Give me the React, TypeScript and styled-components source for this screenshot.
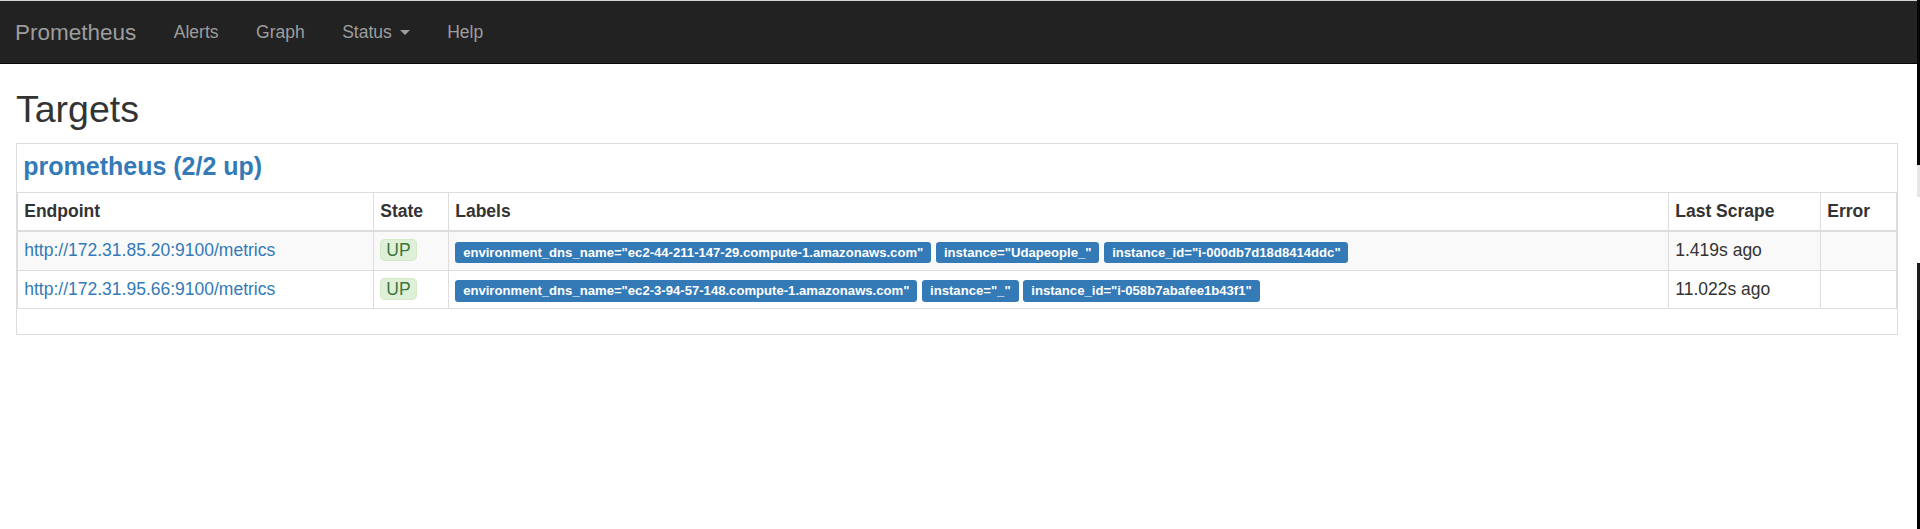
import { Fragment } from "react";
import styled, { createGlobalStyle } from "styled-components";

const GlobalStyle = createGlobalStyle`
  * {
    box-sizing: border-box;
  }
  html,
  body {
    margin: 0;
    padding: 0;
    background: #fff;
  }
  body {
    font-family: "Liberation Sans", Arial, Helvetica, sans-serif;
    font-size: 17.5px;
    line-height: 25px;
    color: #333;
  }
`;

const Page = styled.div`
  display: flex;
  width: 1920px;
  height: 529px;
  overflow: hidden;
`;

const Main = styled.div`
  flex: 1;
  min-width: 0;
  border-top: 1px solid #d4d4d4;
`;

/* the bit of window scrollbar that shows on the right of the capture */
const EdgeStrip = styled.div`
  width: 3px;
  display: flex;
  flex-direction: column;
`;

const EdgeSegment = styled.div<{ $h?: number; $color: string }>`
  height: ${(p) => (p.$h ? `${p.$h}px` : "auto")};
  flex: ${(p) => (p.$h ? "none" : "1")};
  background: ${(p) => p.$color};
`;

const Navbar = styled.nav`
  display: flex;
  align-items: center;
  height: 63px;
  background: #222;
  border-bottom: 1px solid #080808;
`;

const Brand = styled.a`
  font-size: 22.5px;
  line-height: 25px;
  color: #9d9d9d;
  padding: 0 18.75px 0 15px;
  text-decoration: none;
`;

const NavList = styled.ul`
  display: flex;
  margin: 0;
  padding: 0;
  list-style: none;
`;

const NavLink = styled.a`
  display: block;
  padding: 0 18.75px;
  color: #9d9d9d;
  text-decoration: none;
  line-height: 25px;
`;

const Caret = styled.span`
  display: inline-block;
  width: 0;
  height: 0;
  margin-left: 3px;
  vertical-align: middle;
  border-top: 5px solid;
  border-left: 5px solid transparent;
  border-right: 5px solid transparent;
`;

const Container = styled.div`
  padding: 0 19px 0 16px;
`;

const PageTitle = styled.h2`
  font-size: 37.5px;
  font-weight: 500;
  line-height: 1.1;
  margin: 25px 0 12.5px;
  color: #333;
`;

const Panel = styled.div`
  border: 1px solid #ddd;
`;

const JobTitle = styled.h2`
  margin: 0;
  padding: 9.6px 6.25px 10.9px;
  font-size: 25px;
  line-height: 27.5px;
  font-weight: 700;

  a {
    color: #337ab7;
    text-decoration: none;
  }
`;

const Table = styled.table`
  width: 100%;
  border-collapse: collapse;
  border-spacing: 0;
  table-layout: fixed;
  margin-bottom: 25px;
  border: 1px solid #ddd;
`;

const Th = styled.th`
  text-align: left;
  font-weight: 700;
  padding: 6.25px;
  border: 1px solid #ddd;
  border-bottom-width: 2px;
  vertical-align: bottom;
`;

const Row = styled.tr`
  &:nth-of-type(odd) {
    background: #f9f9f9;
  }
`;

const Td = styled.td`
  padding: 6.25px;
  border: 1px solid #ddd;
  vertical-align: top;
  white-space: nowrap;
`;

const EndpointLink = styled.a`
  color: #337ab7;
  text-decoration: none;
`;

const StateIndicator = styled.span`
  padding: 0 5px;
  border: 1px solid #d6e9c6;
  border-radius: 5px;
  background: #dff0d8;
  color: #3c763d;
`;

const Label = styled.span`
  display: inline;
  padding: 0.2em 0.6em 0.3em;
  font-size: 75%;
  font-weight: 700;
  line-height: 1;
  color: #fff;
  background: #337ab7;
  border-radius: 0.25em;
  white-space: nowrap;
  vertical-align: baseline;
`;

interface ITarget {
  endpoint: string;
  state: string;
  labels: string[];
  lastScrape: string;
  error: string;
}

const targets: ITarget[] = [
  {
    endpoint: "http://172.31.85.20:9100/metrics",
    state: "UP",
    labels: [
      'environment_dns_name="ec2-44-211-147-29.compute-1.amazonaws.com"',
      'instance="Udapeople_"',
      'instance_id="i-000db7d18d8414ddc"',
    ],
    lastScrape: "1.419s ago",
    error: "",
  },
  {
    endpoint: "http://172.31.95.66:9100/metrics",
    state: "UP",
    labels: [
      'environment_dns_name="ec2-3-94-57-148.compute-1.amazonaws.com"',
      'instance="_"',
      'instance_id="i-058b7abafee1b43f1"',
    ],
    lastScrape: "11.022s ago",
    error: "",
  },
];

function App() {
  const upCount = targets.filter((t) => t.state === "UP").length;

  return (
    <>
      <GlobalStyle />
      <Page>
        <Main>
          <Navbar>
            <Brand href="#">Prometheus</Brand>
            <NavList>
              <li>
                <NavLink href="#">Alerts</NavLink>
              </li>
              <li>
                <NavLink href="#">Graph</NavLink>
              </li>
              <li>
                <NavLink href="#">
                  Status <Caret />
                </NavLink>
              </li>
              <li>
                <NavLink href="#">Help</NavLink>
              </li>
            </NavList>
          </Navbar>
          <Container>
            <PageTitle>Targets</PageTitle>
            <Panel>
              <JobTitle>
                <a href="#job-prometheus">
                  prometheus ({upCount}/{targets.length} up)
                </a>
              </JobTitle>
              <Table>
                <colgroup>
                  <col style={{ width: 356 }} />
                  <col style={{ width: 75 }} />
                  <col />
                  <col style={{ width: 152 }} />
                  <col style={{ width: 76 }} />
                </colgroup>
                <thead>
                  <tr>
                    <Th>Endpoint</Th>
                    <Th>State</Th>
                    <Th>Labels</Th>
                    <Th>Last Scrape</Th>
                    <Th>Error</Th>
                  </tr>
                </thead>
                <tbody>
                  {targets.map((t) => (
                    <Row key={t.endpoint}>
                      <Td>
                        <EndpointLink href={t.endpoint}>{t.endpoint}</EndpointLink>
                      </Td>
                      <Td>
                        <StateIndicator>{t.state}</StateIndicator>
                      </Td>
                      <Td>
                        {t.labels.map((l) => (
                          <Fragment key={l}>
                            <Label>{l}</Label>{" "}
                          </Fragment>
                        ))}
                      </Td>
                      <Td>{t.lastScrape}</Td>
                      <Td>{t.error}</Td>
                    </Row>
                  ))}
                </tbody>
              </Table>
            </Panel>
          </Container>
        </Main>
        <EdgeStrip>
          <EdgeSegment $h={165} $color="#050505" />
          <EdgeSegment $h={32} $color="#e6e6e6" />
          <EdgeSegment $h={66} $color="#ffffff" />
          <EdgeSegment $h={57} $color="#1c1c1c" />
          <EdgeSegment $color="#000" />
        </EdgeStrip>
      </Page>
    </>
  );
}

export default App;
